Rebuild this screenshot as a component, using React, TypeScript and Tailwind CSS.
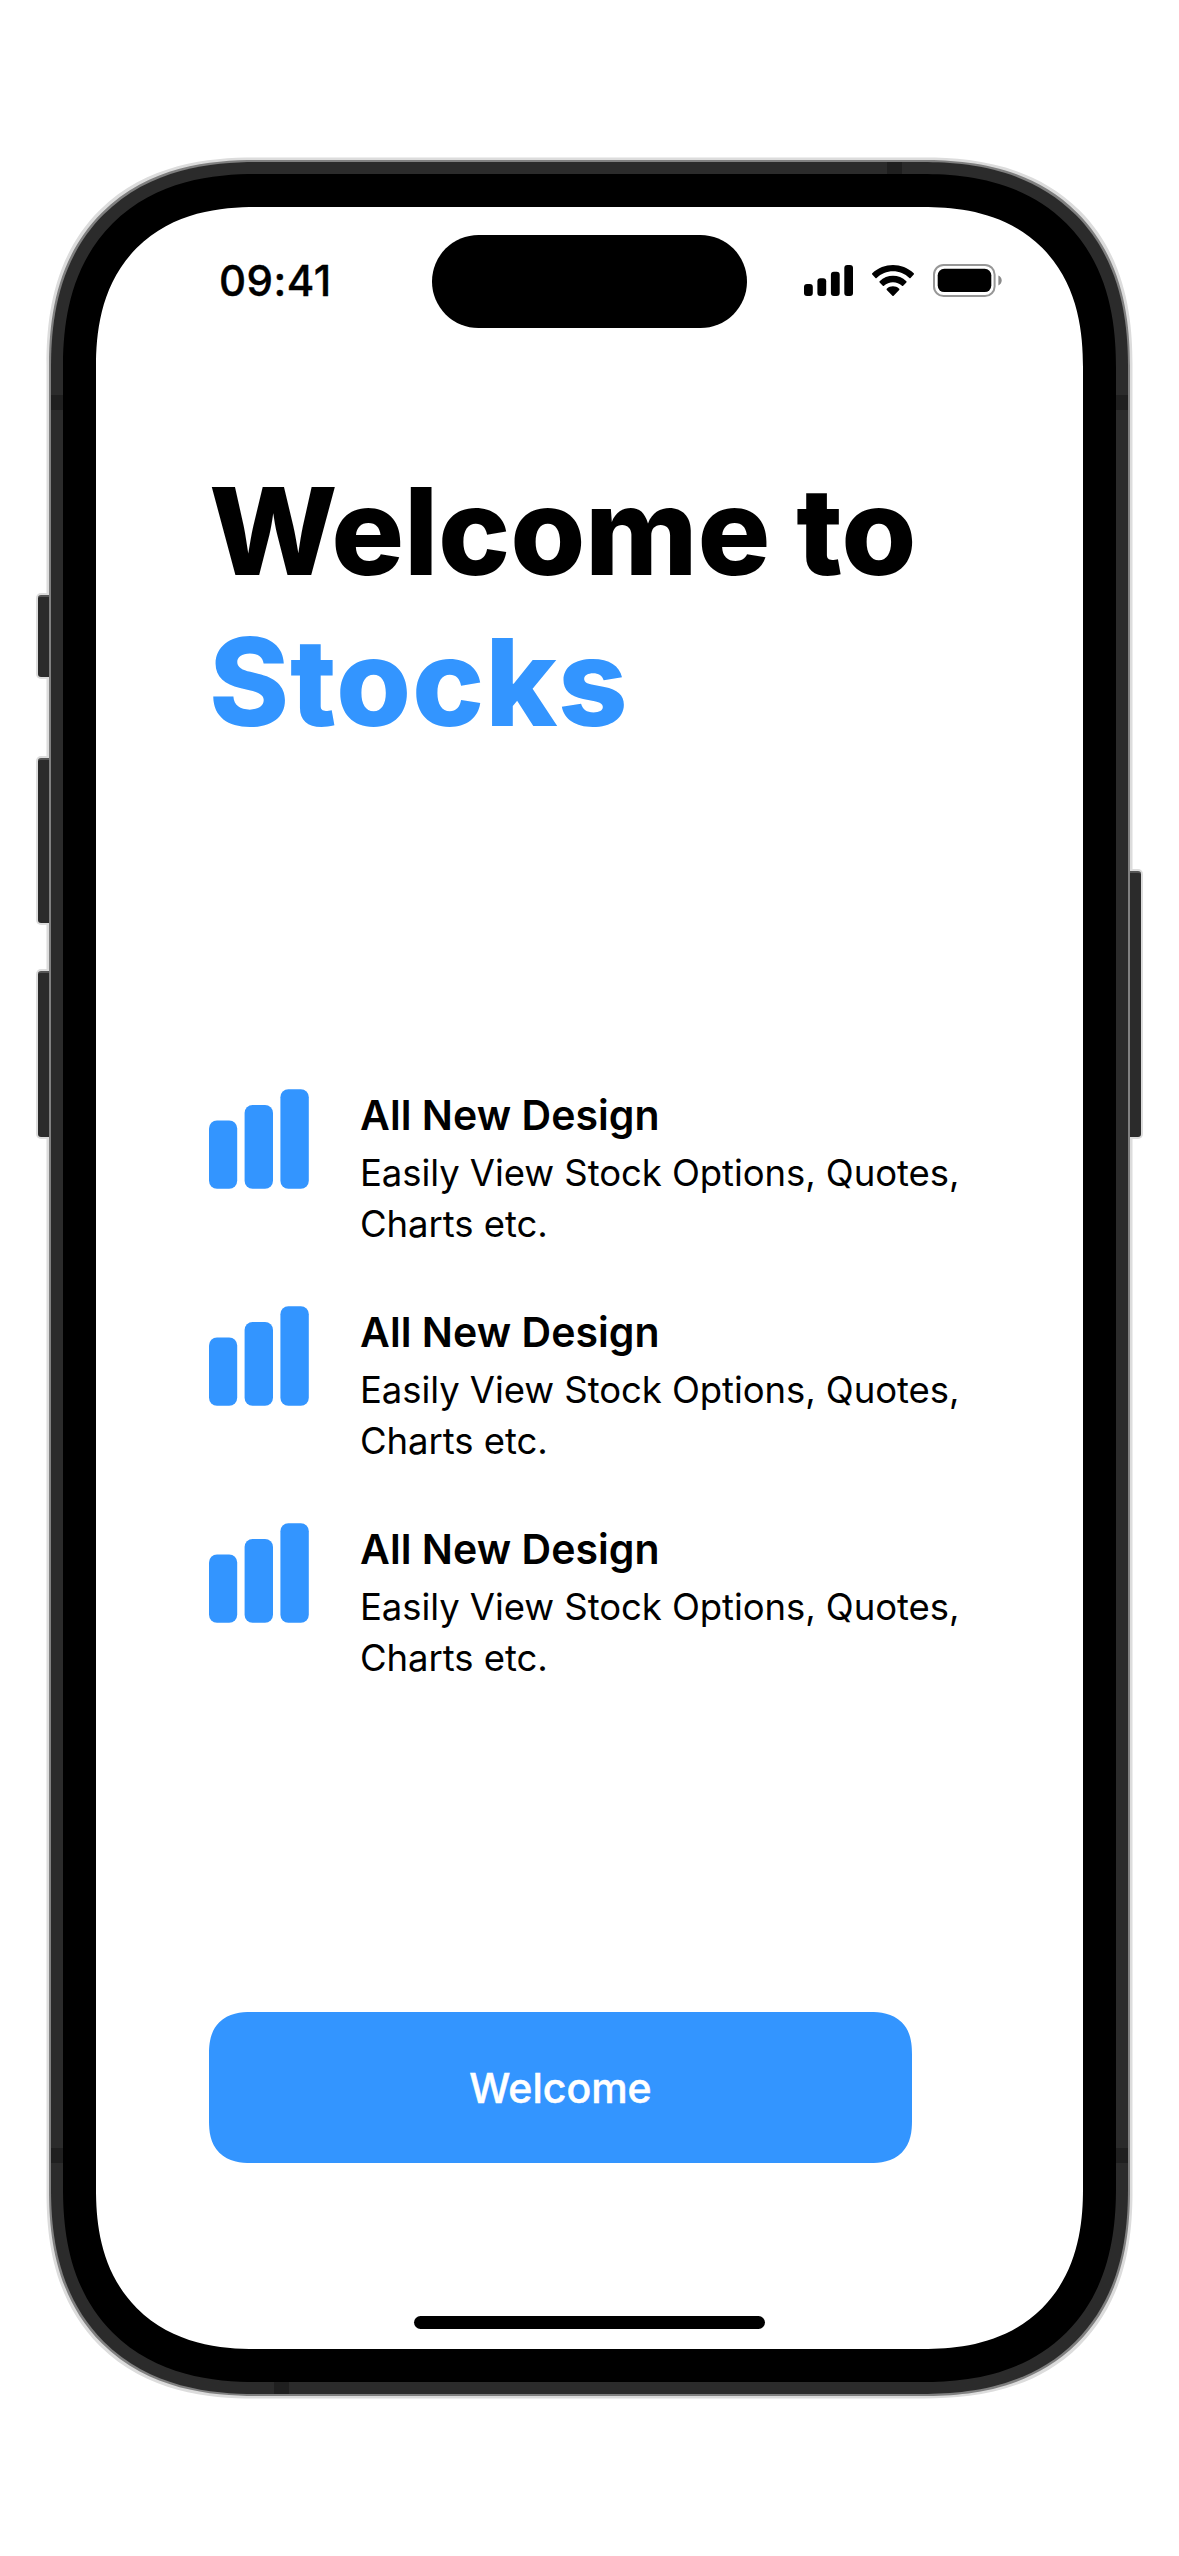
const features = [
  { title: "All New Design", text: "Easily View Stock Options, Quotes, Charts etc." },
  { title: "All New Design", text: "Easily View Stock Options, Quotes, Charts etc." },
  { title: "All New Design", text: "Easily View Stock Options, Quotes, Charts etc." },
];

function SignalIcon() {
  return (
    <svg width="49" height="31" viewBox="0 0 49 31" fill="#000">
      <rect x="0" y="19" width="8.8" height="12" rx="3" />
      <rect x="13.4" y="13.2" width="8.8" height="17.8" rx="3" />
      <rect x="26.9" y="6.8" width="8.8" height="24.2" rx="3" />
      <rect x="40.3" y="0" width="8.7" height="31" rx="3" />
    </svg>
  );
}

function WifiIcon() {
  return (
    <svg width="42" height="31" viewBox="0 0 17.142 12.4" preserveAspectRatio="none" fill="#000">
      <path d="M8.571 2.466C11.058 2.466 13.449 3.429 15.252 5.156C15.388 5.289 15.605 5.288 15.738 5.152L17.036 3.832C17.104 3.763 17.142 3.67 17.141 3.573C17.14 3.475 17.101 3.383 17.032 3.315C12.302 -1.105 4.839 -1.105 0.109 3.315C0.04 3.383 0 3.475 0 3.572C-0.001 3.67 0.037 3.763 0.105 3.832L1.403 5.152C1.536 5.289 1.753 5.29 1.889 5.156C3.693 3.429 6.084 2.466 8.571 2.466Z" />
      <path d="M8.568 6.883C9.926 6.883 11.235 7.394 12.241 8.318C12.377 8.449 12.593 8.446 12.725 8.311L14.022 6.974C14.09 6.904 14.128 6.809 14.127 6.711C14.126 6.612 14.086 6.518 14.016 6.45C10.946 3.556 6.193 3.556 3.122 6.45C3.052 6.518 3.012 6.612 3.011 6.711C3.01 6.81 3.048 6.904 3.117 6.974L4.413 8.311C4.545 8.446 4.761 8.449 4.897 8.318C5.902 7.395 7.21 6.884 8.568 6.883Z" />
      <path d="M11.092 9.48C11.162 9.549 11.2 9.643 11.198 9.741C11.197 9.839 11.155 9.931 11.083 9.997L8.832 12.28C8.766 12.347 8.676 12.385 8.583 12.385C8.489 12.385 8.399 12.347 8.333 12.28L6.04 9.997C5.968 9.931 5.926 9.839 5.925 9.741C5.924 9.643 5.962 9.549 6.032 9.48C7.495 8.2 9.629 8.2 11.092 9.48Z" />
    </svg>
  );
}

function BatteryIcon() {
  return (
    <svg width="70" height="33" viewBox="0 0 70 33">
      <rect x="1" y="1" width="60.6" height="31" rx="9.6" fill="none" stroke="#979797" strokeWidth="2" />
      <rect x="4.7" y="4.7" width="53.6" height="23.4" rx="6.6" fill="#000" />
      <path d="M65.4 11.6V21.4C67.4 20.6 68.7 18.7 68.7 16.5C68.7 14.3 67.4 12.4 65.4 11.6Z" fill="#8a8a8a" />
    </svg>
  );
}

function BarsIcon() {
  return (
    <svg width="100" height="100" viewBox="0 0 100 100" fill="#3395ff" className="shrink-0">
      <rect x="0" y="31.5" width="28.2" height="68.3" rx="8" />
      <rect x="35.6" y="15.9" width="28.4" height="83.9" rx="8" />
      <rect x="71.4" y="0.2" width="28.4" height="99.6" rx="8" />
    </svg>
  );
}

/* Rim of the device: outer halo, hardware keys, metal band and antenna breaks. */
function DeviceRim() {
  const key = "absolute w-[16px] rounded-[3px] border-t-2 border-[#555] bg-[#2b2b2b] shadow-[0_0_0_2px_#dcdcdc]";
  return (
    <div className="absolute inset-0 -z-10">
      <div className="absolute inset-0 rounded-[206px] shadow-[0_0_0_4.5px_#dcdcdc] [corner-shape:superellipse(1.233)]" />
      <span className={`${key} -left-[13px] top-[433px] h-[82px]`} />
      <span className={`${key} -left-[13px] top-[596px] h-[165px]`} />
      <span className={`${key} -left-[13px] top-[809px] h-[166px]`} />
      <span className={`${key} -right-[13px] top-[709px] h-[266px]`} />
      <div className="absolute inset-0 rounded-[206px] bg-[#2b2b2b] shadow-[0_0_0_2px_#808080] [corner-shape:superellipse(1.233)]" />
      <span className="absolute left-0 top-[233px] h-[15px] w-3 bg-[#1f1f1f]" />
      <span className="absolute right-0 top-[233px] h-[15px] w-3 bg-[#1f1f1f]" />
      <span className="absolute left-0 top-[1986px] h-[15px] w-3 bg-[#1f1f1f]" />
      <span className="absolute right-0 top-[1986px] h-[15px] w-3 bg-[#1f1f1f]" />
      <span className="absolute left-[836px] top-0 h-3 w-[15px] bg-[#1f1f1f]" />
      <span className="absolute bottom-0 left-[223px] h-3 w-[15px] bg-[#1f1f1f]" />
    </div>
  );
}

function StatusBar() {
  return (
    <header className="flex h-[121px] shrink-0 items-start">
      <time className="ml-[123px] mt-[57px] w-[213px] text-[42px] font-medium leading-[34px] tracking-[0.5px] [-webkit-text-stroke:0.4px_black]">09:41</time>
      <div className="mt-7 h-[93px] w-[315px] shrink-0 rounded-full bg-black" />
      <div className="ml-[57px] mt-[57px] flex items-start">
        <div className="mt-px"><SignalIcon /></div>
        <div className="ml-[19px] mt-px"><WifiIcon /></div>
        <div className="ml-[18.5px]"><BatteryIcon /></div>
      </div>
    </header>
  );
}

export default function App() {
  return (
    <div className="flex h-[2556px] w-[1179px] bg-white pl-[51px] pt-[162px] font-['Inter',sans-serif] text-black">
      <div className="relative isolate h-[2232px] w-[1077px]">
        <DeviceRim />
        <div className="h-full p-3">
          <div className="h-full rounded-[194px] bg-black p-[33px] [corner-shape:superellipse(1.233)]">
            <div className="flex h-full flex-col rounded-[160px] bg-white [corner-shape:superellipse(1.233)]">
              <StatusBar />
              <main className="flex grow flex-col pl-[113px]">
                <h1 className="mt-[128px] whitespace-nowrap text-[121.5px] font-extrabold leading-[150.5px]">
                  <span className="block tracking-[-0.3px]">Welcome to</span>
                  <span className="block tracking-[0.8px] text-[#3395ff]">Stocks</span>
                </h1>
                <ul className="mt-[332px] flex flex-col">
                  {features.map((f, i) => (
                    <li key={i} className="flex h-[217px] items-start">
                      <BarsIcon />
                      <div className="ml-[51px] pt-px">
                        <h2 className="text-[41px] font-semibold leading-[50px] tracking-[0.05px]">{f.title}</h2>
                        <p className="mt-[8px] w-[620px] text-[36.5px] leading-[50.5px] tracking-[-0.07px]">{f.text}</p>
                      </div>
                    </li>
                  ))}
                </ul>
                <button className="mt-[272px] h-[151px] w-[703px] rounded-[42px] bg-[#3395ff] pt-0.5 text-[41px] font-medium text-white [-webkit-text-stroke:0.5px_white] [corner-shape:superellipse(1.3)]">
                  Welcome
                </button>
              </main>
              <div className="mb-5 h-[13px] w-[351px] shrink-0 self-center rounded-full bg-black" />
            </div>
          </div>
        </div>
      </div>
    </div>
  );
}
